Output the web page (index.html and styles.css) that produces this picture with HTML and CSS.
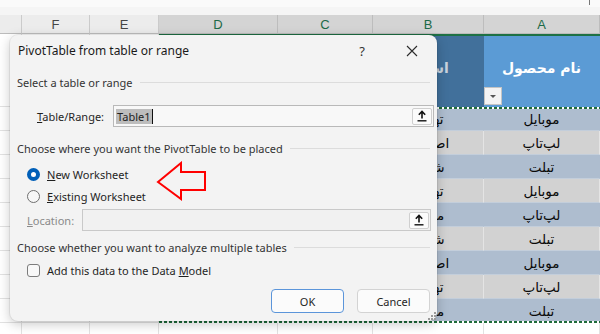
FILE: index.html
```html
<!DOCTYPE html>
<html lang="en">
<head>
    <meta charset="UTF-8">
    <meta name="viewport" content="width=device-width, initial-scale=1.0">
    <title>PivotTable from table or range</title>
    <link rel="stylesheet" href="styles.css">
</head>
<body>
    <div class="sheet">
        <div class="formula-bar"><span class="fx-sep"></span></div>

        <div class="grid">
            <div class="colhead"></div>
            <div class="colhead">F</div>
            <div class="colhead">E</div>
            <div class="colhead sel">D</div>
            <div class="colhead sel">C</div>
            <div class="colhead sel">B</div>
            <div class="colhead sel">A</div>

            <div class="cell"></div><div class="cell"></div><div class="cell"></div>
            <div class="cell th dark">قیمت</div>
            <div class="cell th dark">تعداد</div>
            <div class="cell th dark">استان</div>
            <div class="cell th">نام محصول<span class="filter"></span></div>

            <div class="cell"></div><div class="cell"></div><div class="cell"></div>
            <div class="cell td blue"></div><div class="cell td blue"></div><div class="cell td blue">تهران</div><div class="cell td blue">موبایل</div>

            <div class="cell"></div><div class="cell"></div><div class="cell"></div>
            <div class="cell td gray"></div><div class="cell td gray"></div><div class="cell td gray">اصفهان</div><div class="cell td gray">لپ‌تاپ</div>

            <div class="cell"></div><div class="cell"></div><div class="cell"></div>
            <div class="cell td blue"></div><div class="cell td blue"></div><div class="cell td blue">شیراز</div><div class="cell td blue">تبلت</div>

            <div class="cell"></div><div class="cell"></div><div class="cell"></div>
            <div class="cell td gray"></div><div class="cell td gray"></div><div class="cell td gray">تهران</div><div class="cell td gray">موبایل</div>

            <div class="cell"></div><div class="cell"></div><div class="cell"></div>
            <div class="cell td blue"></div><div class="cell td blue"></div><div class="cell td blue">مشهد</div><div class="cell td blue">لپ‌تاپ</div>

            <div class="cell"></div><div class="cell"></div><div class="cell"></div>
            <div class="cell td gray"></div><div class="cell td gray"></div><div class="cell td gray">شیراز</div><div class="cell td gray">تبلت</div>

            <div class="cell"></div><div class="cell"></div><div class="cell"></div>
            <div class="cell td blue"></div><div class="cell td blue"></div><div class="cell td blue">اصفهان</div><div class="cell td blue">موبایل</div>

            <div class="cell"></div><div class="cell"></div><div class="cell"></div>
            <div class="cell td gray"></div><div class="cell td gray"></div><div class="cell td gray">تهران</div><div class="cell td gray">لپ‌تاپ</div>

            <div class="cell"></div><div class="cell"></div><div class="cell"></div>
            <div class="cell td blue"></div><div class="cell td blue"></div><div class="cell td blue">مشهد</div><div class="cell td blue">تبلت</div>

            <div class="cell"></div><div class="cell"></div><div class="cell"></div>
            <div class="cell"></div><div class="cell"></div><div class="cell"></div><div class="cell"></div>

            <div class="selection"></div>
            <div class="marquee"></div>
        </div>

        <div class="dialog">
            <div class="dlg-title">
                <span class="dlg-name">PivotTable from table or range</span>
                <span class="dlg-help">?</span>
                <span class="dlg-close">
                    <svg width="12" height="12" viewBox="0 0 12 12"><path d="M1 1L11 11M11 1L1 11" stroke="#2b2b2b" stroke-width="1.1" fill="none"/></svg>
                </span>
            </div>

            <div class="group">
                <span>Select a table or range</span><span class="rule"></span>
            </div>
            <div class="field-row range-row">
                <label class="field-label"><u>T</u>able/Range:</label>
                <div class="ref-box">
                    <span class="ref-text"><span class="picked">Table1</span><span class="caret"></span></span>
                    <span class="ref-btn">
                        <svg width="10" height="12" viewBox="0 0 10 12"><path d="M5 1.5V8.5M1.8 4.7L5 1.5L8.2 4.7" stroke="#111" stroke-width="1.6" fill="none"/><path d="M0.5 10.8H9.5" stroke="#111" stroke-width="1.4"/></svg>
                    </span>
                </div>
            </div>

            <div class="group place">
                <span>Choose where you want the PivotTable to be placed</span><span class="rule"></span>
            </div>
            <div class="option first">
                <span class="radio on"></span><span><u>N</u>ew Worksheet</span>
            </div>
            <div class="option">
                <span class="radio"></span><span><u>E</u>xisting Worksheet</span>
            </div>
            <div class="field-row loc-row">
                <label class="field-label off"><u>L</u>ocation:</label>
                <div class="ref-box">
                    <span class="ref-text"></span>
                    <span class="ref-btn">
                        <svg width="10" height="12" viewBox="0 0 10 12"><path d="M5 1.5V8.5M1.8 4.7L5 1.5L8.2 4.7" stroke="#111" stroke-width="1.6" fill="none"/><path d="M0.5 10.8H9.5" stroke="#111" stroke-width="1.4"/></svg>
                    </span>
                </div>
            </div>

            <div class="group multi">
                <span>Choose whether you want to analyze multiple tables</span><span class="rule"></span>
            </div>
            <div class="option check-row">
                <span class="checkbox"></span><span>Add this data to the Data <u>M</u>odel</span>
            </div>

            <div class="actions">
                <button class="btn primary">OK</button>
                <button class="btn">Cancel</button>
            </div>

            <svg class="arrow" width="60" height="42" viewBox="0 0 60 42"><path d="M3 21L26 2V11H50V29H26V38Z" fill="none" stroke="#f00" stroke-width="2" stroke-linejoin="miter"/></svg>
            <svg class="grip" width="8" height="8" viewBox="0 0 8 8"><g fill="#9a9a9a"><rect x="6" y="0" width="2" height="2"/><rect x="3" y="3" width="2" height="2"/><rect x="6" y="3" width="2" height="2"/><rect x="0" y="6" width="2" height="2"/><rect x="3" y="6" width="2" height="2"/><rect x="6" y="6" width="2" height="2"/></g></svg>
        </div>
    </div>
</body>
</html>
```

FILE: styles.css
```css
body {
    margin: 0;
    background: #fff;
    font-family: "Liberation Sans", Arial, sans-serif;
    overflow: hidden;
}
.sheet {
    position: relative;
    width: 600px;
    height: 334px;
    overflow: hidden;
}
.formula-bar {
    height: 15px;
    background: #f5f5f5;
    border-top: 7px solid #fafafa;
    box-sizing: border-box;
    display: flex;
    justify-content: flex-end;
}
.fx-sep {
    width: 1px;
    height: 5px;
    margin: -7px 10px 0 0;
    background: #777;
}
.grid {
    position: relative;
    display: grid;
    grid-template-columns: 22px 68px 69px 119px 95px 111px 116px;
    grid-template-rows: 19px 73px repeat(9, 24px) 24px;
}
.colhead {
    background: #ececec;
    border-right: 1px solid #cbcbcb;
    border-bottom: 1px solid #bcbcbc;
    box-sizing: border-box;
    color: #454545;
    font-size: 13px;
    display: flex;
    align-items: center;
    justify-content: center;
}
.colhead.sel {
    background: #d4d4d4;
    color: #1c6a48;
    border-right-color: #bdbdbd;
}
.cell {
    border-right: 1px solid #e2e2e2;
    border-bottom: 1px solid #e2e2e2;
    box-sizing: border-box;
    font-family: "DejaVu Sans", sans-serif;
    direction: rtl;
    display: flex;
    align-items: center;
    justify-content: center;
    white-space: nowrap;
    overflow: hidden;
}
.th {
    position: relative;
    background: #5b9bd5;
    color: #fff;
    font-weight: bold;
    font-size: 14px;
    border-color: #5b9bd5;
    padding-bottom: 4px;
}
.th.dark {
    background: #41709b;
    color: #c9d4de;
    border-color: #41709b;
}
.filter {
    position: absolute;
    left: 0;
    bottom: 1px;
    width: 18px;
    height: 18px;
    background: #f3f3f3;
    border: 1px solid #c4c4c4;
    box-sizing: border-box;
}
.filter::after {
    content: "";
    position: absolute;
    left: 5px;
    top: 7px;
    border-left: 3px solid transparent;
    border-right: 3px solid transparent;
    border-top: 3px solid #555;
}
.td {
    font-size: 13.5px;
    color: #0a0a0a;
}
.td.blue {
    background: #aebdcf;
    border-bottom-color: #c3cedb;
    border-right-color: #aebdcf;
}
.td.gray {
    background: #d2d2d2;
    border-bottom-color: #c3cedb;
    border-right-color: #e4e4e4;
}
.selection,
.marquee {
    position: absolute;
    inset: 0;
    pointer-events: none;
    grid-column: 4 / 8;
}
.selection {
    grid-row: 2 / 12;
    border-top: 2px solid #1e7145;
}
.marquee {
    grid-row: 3 / 12;
    background:
        repeating-linear-gradient(90deg, #1e6b3a 0 3px, #fff 3px 5px) top / 100% 2px no-repeat,
        repeating-linear-gradient(90deg, #1e6b3a 0 3px, #fff 3px 5px) bottom / 100% 2px no-repeat,
        repeating-linear-gradient(180deg, #1e6b3a 0 3px, #fff 3px 5px) left / 2px 100% no-repeat;
}

/* dialog */
.dialog {
    position: absolute;
    left: 10px;
    top: 35px;
    width: 427px;
    height: 286px;
    box-sizing: border-box;
    background: #f3f3f3;
    border-radius: 8px;
    box-shadow: 0 3px 12px rgba(0, 0, 0, 0.22), 0 0 0 1px rgba(0, 0, 0, 0.06);
    font-family: "Noto Sans", sans-serif;
    font-size: 11px;
    color: #1f1f1f;
    display: flex;
    flex-direction: column;
}
.dlg-title {
    height: 31px;
    display: flex;
    align-items: center;
    padding-left: 8px;
}
.dlg-name {
    flex: 1;
    font-size: 12px;
    color: #1a1a1a;
}
.dlg-help {
    width: 24px;
    text-align: center;
    font-size: 13px;
    color: #333;
}
.dlg-close {
    width: 51px;
    margin-left: 12px;
    display: flex;
    justify-content: center;
}
.group {
    height: 16px;
    margin-top: 8px;
    padding: 0 7px;
    display: flex;
    align-items: center;
    color: #333;
}
.group .rule {
    flex: 1;
    height: 1px;
    margin-left: 7px;
    background: #dcdcdc;
}
.group.place {
    margin-top: 13px;
}
.field-row {
    height: 22px;
    display: flex;
    align-items: center;
}
.range-row {
    margin-top: 15px;
    padding-left: 27px;
}
.range-row .field-label {
    width: 76px;
}
.loc-row {
    margin-top: 2px;
    padding-left: 17px;
}
.loc-row .field-label {
    width: 55px;
}
.field-label.off {
    color: #8a8a8a;
}
.ref-box {
    width: 321px;
    height: 22px;
    box-sizing: border-box;
    border: 1px solid #b9b9b9;
    background: #f8f8f8;
    display: flex;
    align-items: center;
    justify-content: space-between;
    padding: 0 1px 0 2px;
}
.loc-row .ref-box {
    width: 349px;
    border-color: #c9c9c9;
    background: #f1f1f1;
}
.ref-text {
    display: flex;
    align-items: center;
    height: 16px;
}
.picked {
    background: #bdbdbd;
    color: #222;
    padding: 0 1px;
    line-height: 15px;
}
.caret {
    width: 1px;
    height: 15px;
    background: #111;
}
.ref-btn {
    width: 20px;
    height: 17px;
    box-sizing: border-box;
    border: 1px solid #cfcfcf;
    border-radius: 2px;
    background: #fbfbfb;
    display: flex;
    align-items: center;
    justify-content: center;
}
.option {
    height: 22px;
    display: flex;
    align-items: center;
    padding-left: 17px;
    gap: 7px;
}
.option.first {
    margin-top: 7px;
}
.radio {
    width: 13px;
    height: 13px;
    box-sizing: border-box;
    border-radius: 50%;
    border: 1px solid #6f6f6f;
    background: #f7f7f7;
}
.radio.on {
    border: 4px solid #005fb8;
    background: #fff;
}
.check-row {
    height: 20px;
    margin-top: 5px;
}
.checkbox {
    width: 13px;
    height: 13px;
    box-sizing: border-box;
    border: 1px solid #7c7c7c;
    border-radius: 3px;
    background: #f8f8f8;
}
.actions {
    margin-top: 9px;
    padding-right: 7px;
    display: flex;
    justify-content: flex-end;
    gap: 13px;
}
.btn {
    width: 73px;
    height: 24px;
    border: 1px solid #d3d3d3;
    border-radius: 4px;
    background: #fbfbfb;
    font-family: "Noto Sans", sans-serif;
    font-size: 11px;
    color: #1f1f1f;
    padding: 0;
}
.btn.primary {
    border-color: #5b95da;
}
.arrow {
    position: absolute;
    left: 145px;
    top: 126px;
}
.grip {
    position: absolute;
    right: 1px;
    bottom: 1px;
}
```
